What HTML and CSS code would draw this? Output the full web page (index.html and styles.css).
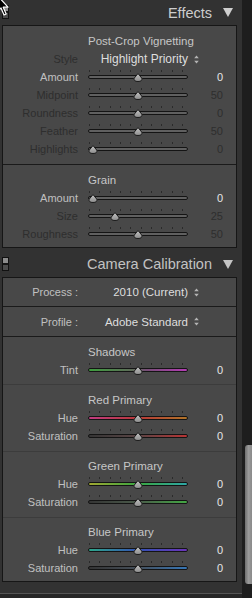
FILE: index.html
```html
<!DOCTYPE html>
<html>
<head>
<meta charset="utf-8">
<link rel="stylesheet" href="styles.css">
</head>
<body>
<svg class="defs" width="0" height="0">
  <defs>
    <linearGradient id="kg" x1="0" y1="0" x2="0" y2="1">
      <stop offset="0" stop-color="#c4c4c4"/>
      <stop offset="1" stop-color="#8c8c8c"/>
    </linearGradient>
    <symbol id="knob" viewBox="0 0 10 9">
      <path d="M5 0.5 L8.8 5.2 Q9.6 8.5 5 8.5 Q0.4 8.5 1.2 5.2 Z" fill="url(#kg)" stroke="#1c1c1c" stroke-width="1"/>
    </symbol>
    <symbol id="ud" viewBox="0 0 5 9">
      <path d="M2.5 0.5 L4.8 3.3 L0.2 3.3 Z M2.5 8.5 L4.8 5.7 L0.2 5.7 Z" fill="#b4b4b4"/>
    </symbol>
  </defs>
</svg>
<div class="app">
  <div class="main">
    <div class="hdr hdr-top">
      <span class="hdr-title">Effects</span>
      <svg class="tri" viewBox="0 0 10 9"><path d="M0 0 H10 L5 9 Z" fill="#cfcfcf"/></svg>
    </div>
    <div class="panel">
      <div class="sec sec-vig">
        <div class="title">Post-Crop Vignetting</div>
        <div class="row">
          <span class="lbl dim">Style</span>
          <span class="dd dd-big">Highlight Priority</span>
          <svg class="ud"><use href="#ud"/></svg>
        </div>
        <div class="row">
          <span class="lbl">Amount</span>
          <div class="slider"><div class="track"></div><svg class="knob" style="left:45px"><use href="#knob"/></svg></div>
          <span class="val">0</span>
        </div>
        <div class="row">
          <span class="lbl dim">Midpoint</span>
          <div class="slider"><div class="track"></div><svg class="knob" style="left:45px"><use href="#knob"/></svg></div>
          <span class="val dim">50</span>
        </div>
        <div class="row">
          <span class="lbl dim">Roundness</span>
          <div class="slider"><div class="track"></div><svg class="knob" style="left:45px"><use href="#knob"/></svg></div>
          <span class="val dim">0</span>
        </div>
        <div class="row">
          <span class="lbl dim">Feather</span>
          <div class="slider"><div class="track"></div><svg class="knob" style="left:45px"><use href="#knob"/></svg></div>
          <span class="val dim">50</span>
        </div>
        <div class="row">
          <span class="lbl dim">Highlights</span>
          <div class="slider"><div class="track"></div><svg class="knob" style="left:0px"><use href="#knob"/></svg></div>
          <span class="val dim">0</span>
        </div>
      </div>
      <div class="sec sec-grain">
        <div class="title">Grain</div>
        <div class="row">
          <span class="lbl">Amount</span>
          <div class="slider"><div class="track"></div><svg class="knob" style="left:0px"><use href="#knob"/></svg></div>
          <span class="val">0</span>
        </div>
        <div class="row">
          <span class="lbl dim">Size</span>
          <div class="slider"><div class="track"></div><svg class="knob" style="left:22px"><use href="#knob"/></svg></div>
          <span class="val dim">25</span>
        </div>
        <div class="row">
          <span class="lbl dim">Roughness</span>
          <div class="slider"><div class="track"></div><svg class="knob" style="left:45px"><use href="#knob"/></svg></div>
          <span class="val dim">50</span>
        </div>
      </div>
    </div>

    <div class="hdr hdr-cal">
      <span class="switch"></span>
      <span class="hdr-title">Camera Calibration</span>
      <svg class="tri" viewBox="0 0 10 9"><path d="M0 0 H10 L5 9 Z" fill="#c4c4c4"/></svg>
    </div>
    <div class="panel panel-cal">
      <div class="box box-process">
        <span class="lbl">Process :</span>
        <span class="dd">2010 (Current)</span>
        <svg class="ud"><use href="#ud"/></svg>
      </div>
      <div class="box box-profile">
        <span class="lbl">Profile :</span>
        <span class="dd">Adobe Standard</span>
        <svg class="ud"><use href="#ud"/></svg>
      </div>
      <div class="sec sec-shadows">
        <div class="title">Shadows</div>
        <div class="row">
          <span class="lbl">Tint</span>
          <div class="slider"><div class="track t-tint"></div><svg class="knob" style="left:45px"><use href="#knob"/></svg></div>
          <span class="val">0</span>
        </div>
      </div>
      <div class="sec sec-red">
        <div class="title">Red Primary</div>
        <div class="row">
          <span class="lbl">Hue</span>
          <div class="slider"><div class="track t-rhue"></div><svg class="knob" style="left:45px"><use href="#knob"/></svg></div>
          <span class="val">0</span>
        </div>
        <div class="row">
          <span class="lbl">Saturation</span>
          <div class="slider"><div class="track t-rsat"></div><svg class="knob" style="left:45px"><use href="#knob"/></svg></div>
          <span class="val">0</span>
        </div>
      </div>
      <div class="sec sec-green">
        <div class="title">Green Primary</div>
        <div class="row">
          <span class="lbl">Hue</span>
          <div class="slider"><div class="track t-ghue"></div><svg class="knob" style="left:45px"><use href="#knob"/></svg></div>
          <span class="val">0</span>
        </div>
        <div class="row">
          <span class="lbl">Saturation</span>
          <div class="slider"><div class="track t-gsat"></div><svg class="knob" style="left:45px"><use href="#knob"/></svg></div>
          <span class="val">0</span>
        </div>
      </div>
      <div class="sec sec-blue">
        <div class="title">Blue Primary</div>
        <div class="row">
          <span class="lbl">Hue</span>
          <div class="slider"><div class="track t-bhue"></div><svg class="knob" style="left:45px"><use href="#knob"/></svg></div>
          <span class="val">0</span>
        </div>
        <div class="row">
          <span class="lbl">Saturation</span>
          <div class="slider"><div class="track t-bsat"></div><svg class="knob" style="left:45px"><use href="#knob"/></svg></div>
          <span class="val">0</span>
        </div>
      </div>
    </div>
    <div class="foot"></div>
  </div>
  <div class="rail"><div class="rail-thumb"></div></div>
</div>
<span class="switch switch-top"></span>
<svg class="cursor" viewBox="0 0 14 20" width="14" height="20">
  <path d="M-3 -5 L-3 12 L1 8 L4 15 L6.2 14 L3.2 7.2 L8 7.2 Z" fill="#000" stroke="#fff" stroke-width="1.2" stroke-linejoin="round"/>
</svg>
</body>
</html>
```

FILE: styles.css
```css
html, body {
  margin: 0;
  padding: 0;
}
body {
  width: 252px;
  height: 598px;
  overflow: hidden;
  background: #323232;
  font-family: "Liberation Sans", Arial, sans-serif;
  position: relative;
}
.defs {
  position: absolute;
  width: 0;
  height: 0;
}
.app {
  display: flex;
  height: 598px;
}
.main {
  width: 242px;
  background: #323232;
}
.rail {
  width: 10px;
  background: #1e1e1e;
}
.rail-thumb {
  margin-top: 445px;
  margin-left: 3px;
  width: 7px;
  height: 139px;
  border-radius: 3px 0 0 3px;
  background: linear-gradient(to right, #6e6e6e, #9a9a9a 50%, #8a8a8a);
}

/* headers */
.hdr {
  display: flex;
  align-items: center;
  justify-content: flex-end;
  padding-right: 9px;
  gap: 11px;
  box-sizing: border-box;
}
.hdr-top {
  height: 25px;
}
.hdr-cal {
  height: 29px;
  padding-top: 3px;
  padding-left: 2px;
}
.hdr-title {
  font-size: 14.5px;
  color: #cdcdcd;
  line-height: 20px;
}
.hdr-cal .hdr-title {
  color: #c2c2c2;
}
.tri {
  width: 10px;
  height: 9px;
}
.switch {
  margin-right: auto;
  width: 7px;
  height: 14px;
  box-sizing: border-box;
  border: 1px solid #111;
  background: linear-gradient(#8c8c8c 0 42%, #151515 42% 56%, #4c4c4c 56%);
}
.switch-top {
  position: absolute;
  left: 2px;
  top: 5px;
  margin: 0;
}
.cursor {
  position: absolute;
  left: 0;
  top: 0;
  overflow: visible;
}

/* panels */
.panel {
  margin-left: 2px;
  width: 235px;
  box-sizing: border-box;
  border: 1px solid #161616;
  background: #484848;
}
.sec {
  padding-top: 6px;
}
.sec-vig {
  padding-bottom: 6px;
  border-bottom: 1px solid #1a1a1a;
}
.sec-grain {
  padding-bottom: 4px;
}
.title {
  height: 18px;
  line-height: 18px;
  padding-left: 85px;
  font-size: 11.5px;
  color: #c6c6c6;
}
.row, .box {
  display: grid;
  grid-template-columns: 75px 110px 35px;
  align-items: center;
  height: 18px;
}
.lbl {
  text-align: right;
  font-size: 11px;
  color: #c0c0c0;
  line-height: 18px;
  white-space: nowrap;
}
.val {
  text-align: right;
  font-size: 11px;
  color: #e6e6e6;
  line-height: 18px;
}
.dim {
  color: #2e2e2e;
}
.dd {
  text-align: right;
  font-size: 11.5px;
  color: #dedede;
  white-space: nowrap;
}
.dd-big {
  font-size: 12px;
}
.ud {
  width: 5px;
  height: 9px;
  margin-left: 6px;
}

/* sliders */
.slider {
  position: relative;
  margin-left: 10px;
  width: 100px;
  height: 18px;
  display: flex;
  align-items: center;
}
.slider::before {
  content: "";
  position: absolute;
  left: 1px;
  top: 2px;
  width: 95px;
  height: 2px;
  background: repeating-linear-gradient(to right, #2a2a2a 0 1px, transparent 1px 10.33px);
}
.track {
  width: 100%;
  height: 4px;
  box-sizing: border-box;
  border: 1px solid #141414;
  border-radius: 2px;
  background: #606060;
}
.knob {
  position: absolute;
  top: 5px;
  width: 10px;
  height: 9px;
}
.t-tint { background: linear-gradient(to right, #3e9e3e, #5f6a5a 45%, #7a4d7a 60%, #b43cb4); }
.t-rhue { background: linear-gradient(to right, #c03c80, #b83838 50%, #b07428); }
.t-rsat { background: linear-gradient(to right, #353535, #5a4545 50%, #b83434); }
.t-ghue { background: linear-gradient(to right, #a0a832, #3aa640 50%, #2ea6a6); }
.t-gsat { background: linear-gradient(to right, #353535, #4a5a4a 50%, #44a844); }
.t-bhue { background: linear-gradient(to right, #2ea68a, #3452b4 50%, #6a34b8); }
.t-bsat { background: linear-gradient(to right, #353535, #454f5a 50%, #3676b6); }

/* calibration */
.box {
  height: 29px;
  border-bottom: 1px solid #1a1a1a;
}
.box-process {
  height: 28px;
}
.sec-shadows {
  padding-bottom: 5px;
  border-bottom: 1px solid #3c3c3c;
}
.sec-red {
  padding-bottom: 6px;
  border-bottom: 1px solid #3c3c3c;
}
.sec-green {
  padding-top: 5px;
  padding-bottom: 6px;
  border-bottom: 1px solid #3c3c3c;
}
.sec-blue {
  padding-top: 5px;
  padding-bottom: 4px;
}
.foot {
  margin-top: 11px;
  height: 4px;
  border-top: 1px solid #555;
  background: #262626;
}
```
